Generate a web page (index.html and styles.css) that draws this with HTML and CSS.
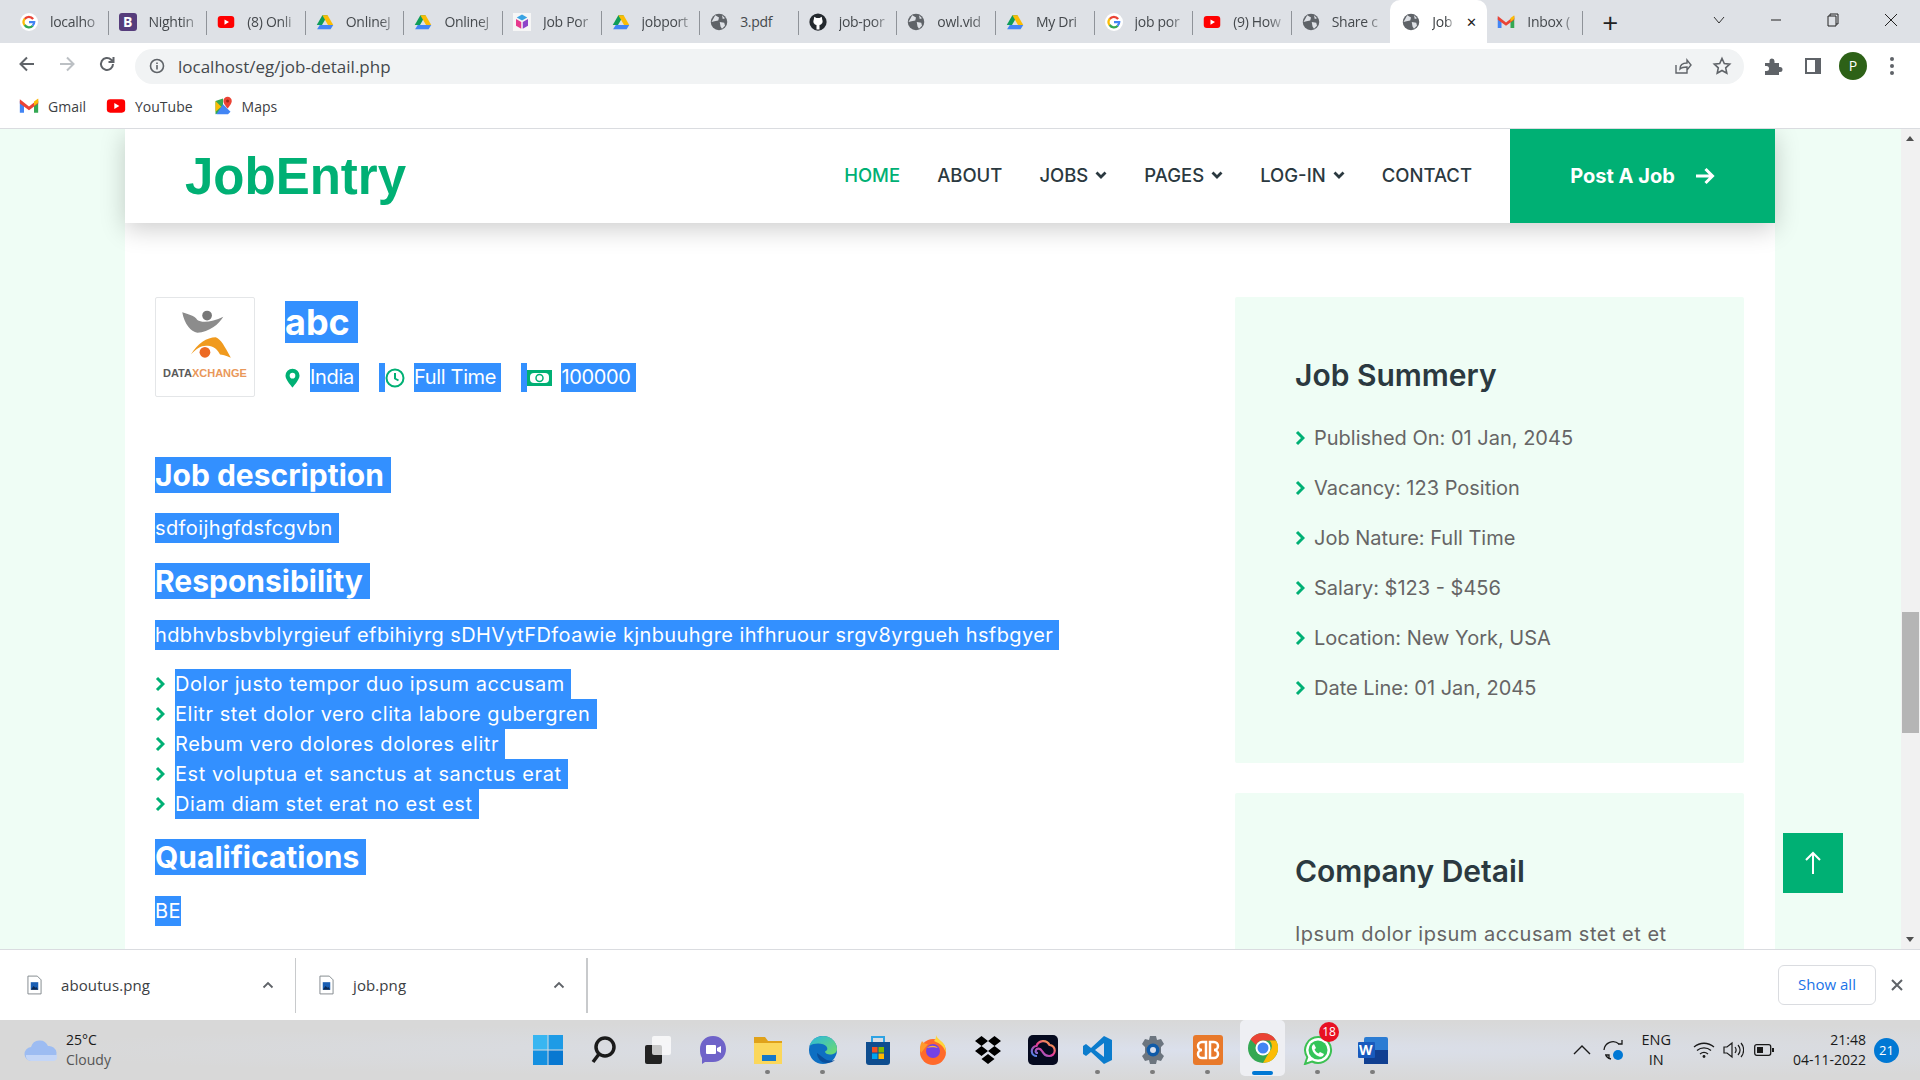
FILE: index.html
```html
<!DOCTYPE html>
<html lang="en">
<head>
    <meta charset="UTF-8">
    <meta name="viewport" content="width=device-width, initial-scale=1.0">
    <title>Job Detail</title>
    <link rel="stylesheet" href="styles.css">
</head>
<body>
    <svg class="defs" width="0" height="0">
        <defs>
            <linearGradient id="edge-top" x1="0" y1="0" x2="1" y2="1">
                <stop offset="0" stop-color="#2bb7e0"/>
                <stop offset="1" stop-color="#6fdc6a"/>
            </linearGradient>
            <linearGradient id="cc-ring" x1="0" y1="1" x2="1" y2="0">
                <stop offset="0" stop-color="#3f8cf0"/>
                <stop offset=".5" stop-color="#e8389a"/>
                <stop offset="1" stop-color="#f6c22e"/>
            </linearGradient>
        </defs>
        <symbol id="i-g" viewBox="0 0 24 24">
            <circle cx="12" cy="12" r="12" fill="#fff"/>
            <path d="M17.500 8A7 7 0 0 0 6.200 8" fill="none" stroke="#ea4335" stroke-width="3"/>
            <path d="M6.400 7.600A7 7 0 0 0 6.400 16.400" fill="none" stroke="#fbbc05" stroke-width="3"/>
            <path d="M6.200 16A7 7 0 0 0 17 17" fill="none" stroke="#34a853" stroke-width="3"/>
            <path d="M12 12h7a7 7 0 0 1-2.200 5" fill="none" stroke="#4285f4" stroke-width="3"/>
        </symbol>
        <symbol id="i-yt" viewBox="0 0 24 24">
            <rect x="1" y="4" width="22" height="16" rx="4" fill="#f00"/>
            <path d="M10 8.500l6 3.500-6 3.500z" fill="#fff"/>
        </symbol>
        <symbol id="i-drive" viewBox="0 0 24 24">
            <path d="M8.500 3h7l-7.500 13H1z" fill="#0f9d58"/>
            <path d="M8.500 3h7l7.500 13h-7z" fill="#fbbc05"/>
            <path d="M5 16h18l-3.500 5.500h-18z" fill="#4285f4"/>
        </symbol>
        <symbol id="i-globe" viewBox="0 0 24 24">
            <circle cx="12" cy="12" r="11" fill="#5f6368"/>
            <path d="M7 3l5 3-1 4-5 1-4 1zM13 12l6 1 1 4-4 4-2-3zM16 3l4 4-3 1z" fill="#dee1e6"/>
        </symbol>
        <symbol id="i-gh" viewBox="0 0 24 24">
            <circle cx="12" cy="12" r="11.500" fill="#24292e"/>
            <path d="M7 5l3 1.500h4L17 5l.7 4c1.500 3.500-.7 6.500-3.700 7v6h-4v-6c-3-.5-5.200-3.500-3.700-7z" fill="#fff"/>
        </symbol>
        <symbol id="i-gmail" viewBox="0 0 24 24">
            <path d="M1 6v14h5V10z" fill="#4285f4"/>
            <path d="M23 6v14h-5V10z" fill="#34a853"/>
            <path d="M1 4l11 8.500L23 4v5l-11 8L1 9z" fill="#ea4335"/>
            <path d="M18 6.500L23 3v5l-5 3.600z" fill="#fbbc05"/>
        </symbol>
        <symbol id="i-maps" viewBox="0 0 24 24">
            <path d="M3 6l9-3v16l-9 3z" fill="#34a853"/>
            <path d="M12 10l9 9-3 3H4z" fill="#4285f4"/>
            <path d="M3 6l7 7-7 6z" fill="#fbbc05"/>
            <path d="M17.500 1a5 5 0 0 1 5 5c0 3.500-5 9-5 9s-5-5.500-5-9a5 5 0 0 1 5-5z" fill="#ea4335"/>
            <circle cx="17.500" cy="6" r="1.800" fill="#a52714"/>
        </symbol>
        <symbol id="i-cube" viewBox="0 0 24 24">
            <rect width="24" height="24" fill="#f6f6f6"/>
            <path d="M12 2l7 4-7 4-7-4z" fill="#3aa3e3"/>
            <path d="M4 8l7 4v9l-7-4z" fill="#e6398e"/>
            <path d="M20 8l-7 4v9l7-4z" fill="#8e44c9"/>
        </symbol>
        <symbol id="i-angle" viewBox="0 0 10 16">
            <path d="M2 2l6 6-6 6" fill="none" stroke="#00b074" stroke-width="3"/>
        </symbol>
        <symbol id="i-down" viewBox="0 0 12 8">
            <path d="M1.500 1.500L6 6l4.500-4.500" fill="none" stroke="#2b3940" stroke-width="2.800"/>
        </symbol>
        <symbol id="i-file" viewBox="0 0 16 20">
            <path d="M1 .5h10l4 4v15H1z" fill="#fff" stroke="#80868b"/>
            <rect x="4" y="7" width="8" height="8" fill="#1a5fb4"/>
            <path d="M4 15l3-4 2 2 1-1 2 3z" fill="#0b2a55"/>
        </symbol>
    </svg>

    <header class="tabstrip">
        <div class="tab"><svg class="fav"><use href="#i-g"/></svg><span class="tab-title">localho</span></div>
        <div class="tab"><span class="fav fav-bs">B</span><span class="tab-title">Nightin</span></div>
        <div class="tab"><svg class="fav"><use href="#i-yt"/></svg><span class="tab-title">(8) Onli</span></div>
        <div class="tab"><svg class="fav"><use href="#i-drive"/></svg><span class="tab-title">OnlineJ</span></div>
        <div class="tab"><svg class="fav"><use href="#i-drive"/></svg><span class="tab-title">OnlineJ</span></div>
        <div class="tab"><svg class="fav"><use href="#i-cube"/></svg><span class="tab-title">Job Por</span></div>
        <div class="tab"><svg class="fav"><use href="#i-drive"/></svg><span class="tab-title">jobport</span></div>
        <div class="tab"><svg class="fav"><use href="#i-globe"/></svg><span class="tab-title tab-full">3.pdf</span></div>
        <div class="tab"><svg class="fav"><use href="#i-gh"/></svg><span class="tab-title">job-por</span></div>
        <div class="tab"><svg class="fav"><use href="#i-globe"/></svg><span class="tab-title">owl.vid</span></div>
        <div class="tab"><svg class="fav"><use href="#i-drive"/></svg><span class="tab-title">My Dri</span></div>
        <div class="tab"><svg class="fav"><use href="#i-g"/></svg><span class="tab-title">job por</span></div>
        <div class="tab"><svg class="fav"><use href="#i-yt"/></svg><span class="tab-title">(9) How</span></div>
        <div class="tab no-sep"><svg class="fav"><use href="#i-globe"/></svg><span class="tab-title">Share c</span></div>
        <div class="tab tab-active"><svg class="fav"><use href="#i-globe"/></svg><span class="tab-title">Job</span><span class="tab-close">✕</span></div>
        <div class="tab tab-last"><svg class="fav"><use href="#i-gmail"/></svg><span class="tab-title">Inbox (</span></div>
        <div class="tab-new">+</div>
        <div class="window-btns">
            <svg width="12" height="8" viewBox="0 0 12 8"><path d="M1 1l5 6 5-6" fill="none" stroke="#333"/></svg>
            <svg width="12" height="12" viewBox="0 0 12 12"><path d="M1 6h10" stroke="#222"/></svg>
            <svg width="12" height="14" viewBox="0 0 12 14"><path d="M3 3V1h8v10H9M1 3h8v10H1z" fill="none" stroke="#222"/></svg>
            <svg width="14" height="14" viewBox="0 0 14 14"><path d="M1 1l12 12M13 1L1 13" stroke="#222"/></svg>
        </div>
    </header>

    <div class="toolbar">
        <svg class="tool" viewBox="0 0 20 20"><path d="M17 10H4M10 3.500L3.500 10l6.500 6.500" fill="none" stroke="#5f6368" stroke-width="2"/></svg>
        <svg class="tool" viewBox="0 0 20 20"><path d="M3 10h13M10 3.500l6.500 6.500-6.500 6.500" fill="none" stroke="#bcc0c4" stroke-width="2"/></svg>
        <svg class="tool" viewBox="0 0 20 20"><path d="M16 10a6 6 0 1 1-1.800-4.300L16 7.500M16.500 3v5h-5" fill="none" stroke="#5f6368" stroke-width="2"/></svg>
        <div class="omnibox">
            <svg class="omni-info" viewBox="0 0 16 16"><circle cx="8" cy="8" r="6.500" fill="none" stroke="#5f6368" stroke-width="1.600"/><path d="M8 7v4.500M8 4.500v1.500" stroke="#5f6368" stroke-width="1.600"/></svg>
            <span class="omni-url">localhost/eg/job-detail.php</span>
            <svg class="omni-act" viewBox="0 0 20 20"><path d="M4 9v8h11v-3M8 13c0-4 3-6 7-6V4l4 5-4 5v-3c-3 0-5 0-7 2z" fill="none" stroke="#5f6368" stroke-width="1.400"/></svg>
            <svg class="omni-act" viewBox="0 0 20 20"><path d="M10 2.500l2.300 5 5.400.6-4 3.700 1.100 5.400-4.800-2.700-4.800 2.700 1.100-5.400-4-3.700 5.400-.6z" fill="none" stroke="#5f6368" stroke-width="1.600"/></svg>
        </div>
        <svg class="tool tool-ext" viewBox="0 0 20 20"><path d="M2 7h4.500V5a2.500 2.500 0 0 1 5 0v2H16v4h1a2.500 2.500 0 0 1 0 5h-1v3H2v-4h1.500a2.500 2.500 0 0 0 0-5H2z" fill="#5f6368"/></svg>
        <svg class="tool tool-side" viewBox="0 0 20 20"><rect x="2" y="2" width="16" height="16" fill="#5f6368"/><rect x="4" y="4" width="8" height="12" fill="#fff"/></svg>
        <span class="avatar">P</span>
        <span class="kebab"><i></i><i></i><i></i></span>
    </div>

    <div class="bookmarks">
        <span class="bookmark"><svg class="fav"><use href="#i-gmail"/></svg>Gmail</span>
        <span class="bookmark"><svg class="fav"><use href="#i-yt"/></svg>YouTube</span>
        <span class="bookmark"><svg class="fav"><use href="#i-maps"/></svg>Maps</span>
    </div>

    <main class="viewport">
        <div class="page">
            <div class="container">
                <nav class="navbar">
                    <span class="brand">JobEntry</span>
                    <ul class="nav-links">
                        <li class="nav-active">HOME</li>
                        <li>ABOUT</li>
                        <li>JOBS <svg class="caret"><use href="#i-down"/></svg></li>
                        <li>PAGES <svg class="caret"><use href="#i-down"/></svg></li>
                        <li>LOG-IN <svg class="caret"><use href="#i-down"/></svg></li>
                        <li>CONTACT</li>
                    </ul>
                    <div class="post-job">Post A Job
                        <svg width="20" height="18" viewBox="0 0 20 18"><path d="M1 9h16M10.500 2l7 7-7 7" fill="none" stroke="#fff" stroke-width="3"/></svg>
                    </div>
                </nav>

                <div class="content">
                    <section class="detail">
                        <div class="job-head">
                            <div class="job-logo">
                                <svg class="logo-mark" width="54" height="52" viewBox="0 0 50 48">
                                    <circle cx="26" cy="6" r="4.500" fill="#777"/>
                                    <path d="M3 3c6 2 11 3 14 7 4 3 14 2 24-3-4 7-13 14-24 15-6-1-12-8-14-19z" fill="#8c8c8c"/>
                                    <path d="M11 42C17 32 26 26 34 26c5 2 8 8 14 19-5-2-8-3-10-3-4-7-8-8-13-8-5 0-9 3-14 8z" fill="#f09a1e"/>
                                    <circle cx="24" cy="40" r="5" fill="#ec6a24"/>
                                </svg>
                                <span class="logo-word"><b>DATA</b><em>XCHANGE</em></span>
                            </div>
                            <div class="job-title">
                                <h3 class="title-text"><span class="sel">abc&nbsp;</span></h3>
                                <div class="job-meta">
                                    <svg class="meta-pin" viewBox="0 0 16 20"><path d="M8 0a7.500 7.500 0 0 1 7.500 7.500C15.500 12 8 20 8 20S.5 12 .5 7.500A7.500 7.500 0 0 1 8 0z" fill="#00b074"/><circle cx="8" cy="7.500" r="3" fill="#fff"/></svg>
                                    <span class="sel meta-text">India&nbsp;</span>
                                    <span class="sel meta-gap"></span>
                                    <svg class="meta-clock" viewBox="0 0 20 20"><circle cx="10" cy="10" r="8.500" fill="none" stroke="#00b074" stroke-width="2"/><path d="M10 5v5.500l3.500 2" fill="none" stroke="#00b074" stroke-width="2"/></svg>
                                    <span class="sel meta-text">Full Time&nbsp;</span>
                                    <span class="sel meta-gap"></span>
                                    <svg class="meta-money" viewBox="0 0 25 16"><rect width="25" height="16" fill="#00b074"/><rect x="3" y="3" width="19" height="10" rx="4" fill="#fff"/><circle cx="12.500" cy="8" r="3.500" fill="none" stroke="#00b074" stroke-width="1.500"/></svg>
                                    <span class="sel meta-text">100000&nbsp;</span>
                                </div>
                            </div>
                        </div>

                        <h4 class="block-head"><span class="sel">Job description&nbsp;</span></h4>
                        <p class="block-text"><span class="sel">sdfoijhgfdsfcgvbn&nbsp;</span></p>
                        <h4 class="block-head head-tight"><span class="sel">Responsibility&nbsp;</span></h4>
                        <p class="block-text"><span class="sel">hdbhvbsbvblyrgieuf efbihiyrg sDHVytFDfoawie kjnbuuhgre ihfhruour srgv8yrgueh hsfbgyer&nbsp;</span></p>
                        <ul class="check-list">
                            <li><svg class="angle"><use href="#i-angle"/></svg><span class="sel">Dolor justo tempor duo ipsum accusam&nbsp;</span></li>
                            <li><svg class="angle"><use href="#i-angle"/></svg><span class="sel">Elitr stet dolor vero clita labore gubergren&nbsp;</span></li>
                            <li><svg class="angle"><use href="#i-angle"/></svg><span class="sel">Rebum vero dolores dolores elitr&nbsp;</span></li>
                            <li><svg class="angle"><use href="#i-angle"/></svg><span class="sel">Est voluptua et sanctus at sanctus erat&nbsp;</span></li>
                            <li><svg class="angle"><use href="#i-angle"/></svg><span class="sel">Diam diam stet erat no est est&nbsp;</span></li>
                        </ul>
                        <h4 class="block-head head-tight"><span class="sel">Qualifications&nbsp;</span></h4>
                        <p class="block-text"><span class="sel">BE</span></p>
                    </section>

                    <aside class="sidebar">
                        <div class="side-card">
                            <h4 class="side-head">Job Summery</h4>
                            <ul class="side-list">
                                <li><svg class="angle"><use href="#i-angle"/></svg>Published On: 01 Jan, 2045</li>
                                <li><svg class="angle"><use href="#i-angle"/></svg>Vacancy: 123 Position</li>
                                <li><svg class="angle"><use href="#i-angle"/></svg>Job Nature: Full Time</li>
                                <li><svg class="angle"><use href="#i-angle"/></svg>Salary: $123 - $456</li>
                                <li><svg class="angle"><use href="#i-angle"/></svg>Location: New York, USA</li>
                                <li><svg class="angle"><use href="#i-angle"/></svg>Date Line: 01 Jan, 2045</li>
                            </ul>
                        </div>
                        <div class="side-card">
                            <h4 class="side-head">Company Detail</h4>
                            <p class="side-text">Ipsum dolor ipsum accusam stet et et</p>
                        </div>
                    </aside>
                </div>
            </div>
        </div>
        <div class="back-top">
            <svg width="18" height="24" viewBox="0 0 18 24"><path d="M9 23V2M2 9l7-7 7 7" fill="none" stroke="#fff" stroke-width="2"/></svg>
        </div>
        <div class="scrollbar">
            <span class="sb-up"></span>
            <span class="sb-thumb"></span>
            <span class="sb-down"></span>
        </div>
    </main>

    <div class="downloads">
        <div class="dl-item"><svg class="dl-file"><use href="#i-file"/></svg><span class="dl-name">aboutus.png</span><svg class="dl-caret" viewBox="0 0 12 8"><path d="M1.500 6.500L6 2l4.500 4.500" fill="none" stroke="#5f6368" stroke-width="1.800"/></svg></div>
        <div class="dl-item"><svg class="dl-file"><use href="#i-file"/></svg><span class="dl-name">job.png</span><svg class="dl-caret" viewBox="0 0 12 8"><path d="M1.500 6.500L6 2l4.500 4.500" fill="none" stroke="#5f6368" stroke-width="1.800"/></svg></div>
        <button class="show-all">Show all</button>
        <svg class="dl-close" viewBox="0 0 12 12"><path d="M1 1l10 10M11 1L1 11" stroke="#5f6368" stroke-width="2"/></svg>
    </div>

    <footer class="taskbar">
        <div class="weather">
            <svg width="34" height="24" viewBox="0 0 34 24"><path d="M8 23a7 7 0 0 1-1-14 9 9 0 0 1 17-1 7.500 7.500 0 0 1 2 15z" fill="#9dbcf2"/><path d="M2 17h31v2a4 4 0 0 1-4 4H7a5 5 0 0 1-5-6z" fill="#c4d6f7"/></svg>
            <div class="weather-text"><span>25°C</span><span class="weather-sub">Cloudy</span></div>
        </div>
        <div class="task-icons">
            <span class="task"><svg width="30" height="30" viewBox="0 0 30 30"><rect width="14.500" height="14.500" fill="#38b6f1"/><rect x="15.500" width="14.500" height="14.500" fill="#1e9be6"/><rect y="15.500" width="14.500" height="14.500" fill="#1590e0"/><rect x="15.500" y="15.500" width="14.500" height="14.500" fill="#0878d1"/></svg></span>
            <span class="task"><svg width="30" height="30" viewBox="0 0 30 30"><circle cx="17" cy="12" r="9" fill="none" stroke="#1a1a1a" stroke-width="3.500"/><path d="M11 19l-6 8" stroke="#1a1a1a" stroke-width="3.500"/></svg></span>
            <span class="task"><svg width="30" height="30" viewBox="0 0 30 30"><rect x="2" y="10" width="17" height="19" rx="2" fill="#222"/><rect x="9" y="1" width="19" height="19" rx="2" fill="#fff" fill-opacity=".75"/></svg></span>
            <span class="task"><svg width="30" height="30" viewBox="0 0 30 30"><path d="M15 1c8 0 13 6 13 13s-5 13-13 13H7l-3 2v-6C2 20 2 17 2 14 2 7 7 1 15 1z" fill="#6f63c9"/><rect x="8" y="10" width="10" height="9" rx="1" fill="#fff"/><path d="M19 13l4-2v7l-4-2z" fill="#fff"/></svg></span>
            <span class="task task-run"><svg width="30" height="30" viewBox="0 0 30 30"><path d="M1 2h11l3 4h14v5H1z" fill="#e0a21a"/><rect x="1" y="8" width="28" height="21" fill="#fbd75b"/><rect x="9" y="20" width="14" height="6" fill="#1478c8"/></svg></span>
            <span class="task task-run"><svg width="30" height="30" viewBox="0 0 30 30"><circle cx="15" cy="15" r="14" fill="#0e6fc2"/><path d="M1.500 11C3.500 4.500 9 1 15 1c8 0 14 6 14 13 0 4-3.500 5.500-7 5.500-2.500 0-5-1-5-3 2.500-1 3-3 1.500-5C16 8 6 7.500 1.500 11z" fill="url(#edge-top)"/><path d="M9 18c0 5 4 10 10 10 3 0 6-1 8-3-3 1-7 1-10-1-3-2-5-4-8-6z" fill="#0a4f9c"/></svg></span>
            <span class="task"><svg width="30" height="30" viewBox="0 0 30 30"><path d="M9 7V2h12v5" fill="none" stroke="#2ea3e3" stroke-width="2"/><path d="M3 7h24v20a3 3 0 0 1-3 3H6a3 3 0 0 1-3-3z" fill="#0e4d8f"/><rect x="9" y="12" width="5.500" height="5.500" fill="#f25022"/><rect x="15.500" y="12" width="5.500" height="5.500" fill="#7fba00"/><rect x="9" y="18.500" width="5.500" height="5.500" fill="#00a4ef"/><rect x="15.500" y="18.500" width="5.500" height="5.500" fill="#ffb900"/></svg></span>
            <span class="task"><svg width="30" height="30" viewBox="0 0 30 30"><circle cx="15" cy="17" r="13" fill="#ff6a2b"/><path d="M18 0c1 4 7 6 9 11l1 7c-3-9-8-10-12-12 2-2 2-4 2-6z" fill="#ffd53a"/><path d="M4 6c-2 4-3 8-1 12l7-9c-3 0-5-1-6-3z" fill="#ff9a2b"/><circle cx="15" cy="16" r="7" fill="#7542e5"/><path d="M9 13c3-3 8-3 11 0-3-1-8-1-11 0z" fill="#ffb52e"/></svg></span>
            <span class="task"><svg width="30" height="30" viewBox="0 0 30 30" fill="#000"><path d="M8.500 1l6.500 5-6.500 5L2 6zM21.500 1L28 6l-6.500 5L15 6zM8.500 11l6.500 5-6.500 5L2 16zM21.500 11l6.500 5-6.500 5L15 16zM15 19l6.500 5L15 29l-6.500-5z"/></svg></span>
            <span class="task"><svg width="30" height="30" viewBox="0 0 30 30"><rect width="30" height="30" rx="5" fill="#050a1f"/><path d="M9 21a5 5 0 0 1-.5-10A7 7 0 0 1 21.500 10 5.500 5.500 0 0 1 21 21c-4 0-5-2-7-5s-5-3-6-1 0 3 2 3" fill="none" stroke="url(#cc-ring)" stroke-width="2.200"/></svg></span>
            <span class="task task-run"><svg width="30" height="30" viewBox="0 0 30 30"><path d="M21 1l8 4v20l-8 4L8 17l-5 4-3-2v-8l3-2 5 4z" fill="#0b7ccd"/><path d="M21 8v14l-9-7z" fill="#d8deec"/></svg></span>
            <span class="task task-run"><svg width="30" height="30" viewBox="0 0 30 30"><path d="M12 1h6l1 4 4-1 3 5-3 3v6l3 3-3 5-4-1-1 4h-6l-1-4-4 1-3-5 3-3v-6L4 9l3-5 4 1z" fill="#6c757f"/><circle cx="15" cy="15" r="6.500" fill="#0f5aa8"/><circle cx="15" cy="15" r="3" fill="#d8deec"/></svg></span>
            <span class="task task-run"><svg width="30" height="30" viewBox="0 0 30 30"><rect width="30" height="30" rx="3" fill="#e8792b"/><path d="M9 7h4v16H9a4 4 0 0 1 0-8 4 4 0 0 1 0-8zM21 7h-4v16h4a4 4 0 0 0 0-8 4 4 0 0 0 0-8z" fill="none" stroke="#fff" stroke-width="2.500"/></svg></span>
            <span class="task task-chrome"><svg width="30" height="30" viewBox="0 0 30 30"><circle cx="15" cy="15" r="15" fill="#34a853"/><path d="M15 0a15 15 0 0 1 13 7.500H15a7.500 7.500 0 0 0-7 4.500L2.500 6.500A15 15 0 0 1 15 0z" fill="#ea4335"/><path d="M28 7.500A15 15 0 0 1 15 30l6.500-11.500a7.500 7.500 0 0 0 0-11z" fill="#fbbc05"/><circle cx="15" cy="15" r="7.500" fill="#fff"/><circle cx="15" cy="15" r="5.500" fill="#4285f4"/></svg></span>
            <span class="task task-run"><svg width="30" height="30" viewBox="0 0 30 30"><path d="M15 2a13 13 0 1 1-6 24.500L2 29l2.300-6.800A13 13 0 0 1 15 2z" fill="#fff" stroke="#3cc153" stroke-width="2"/><circle cx="15" cy="15" r="9.500" fill="#34c559"/><path d="M11 9l2 4-1.500 1.500c1 2 2 3 4 4L17 17l4 2c-1 3-3 3-5 2.500-4-1.500-6-4-7-7.500-.5-2 0-4 2-5z" fill="#fff"/></svg><span class="task-badge">18</span></span>
            <span class="task task-run"><svg width="30" height="30" viewBox="0 0 30 30"><rect x="6" y="2" width="24" height="27" rx="2" fill="#2b7cd3"/><rect x="6" y="15" width="24" height="14" fill="#103f91"/><rect y="7" width="17" height="16" rx="1" fill="#185abd"/></svg><b class="word-w">W</b></span>
        </div>
        <div class="tray">
            <svg width="18" height="10" viewBox="0 0 18 10"><path d="M1 9l8-8 8 8" fill="none" stroke="#1a1a1a" stroke-width="1.400"/></svg>
            <svg class="tray-sync" width="24" height="24" viewBox="0 0 24 24"><path d="M2 12a9 9 0 0 1 15-6l3 0M20 2v4h-4M3 17h4v4M4 18a9 9 0 0 0 5 3" fill="none" stroke="#1a1a1a" stroke-width="1.300"/><circle cx="16" cy="17" r="5" fill="#0078d4"/></svg>
            <div class="tray-lang"><span>ENG</span><span>IN</span></div>
            <svg class="tray-wifi" width="22" height="16" viewBox="0 0 22 16"><path d="M1 5c6-5 14-5 20 0M4 8.500c4-3.500 10-3.500 14 0M7 12c2.500-2 5.500-2 8 0" fill="none" stroke="#1a1a1a" stroke-width="1.300"/><circle cx="11" cy="14.500" r="1.400" fill="#1a1a1a"/></svg>
            <svg class="tray-sound" width="21" height="18" viewBox="0 0 21 18"><path d="M1 6h3l5-4v14l-5-4H1z" fill="none" stroke="#1a1a1a" stroke-width="1.200"/><path d="M12 6c1.500 2 1.500 4 0 6M15 4c2.500 3 2.500 7 0 10M18 2c3.500 4 3.500 10 0 14" fill="none" stroke="#1a1a1a" stroke-width="1.200"/></svg>
            <svg class="tray-batt" width="20" height="12" viewBox="0 0 20 12"><rect x=".7" y=".7" width="16" height="10.600" rx="2" fill="none" stroke="#1a1a1a" stroke-width="1.300"/><rect x="3" y="3" width="6" height="6" fill="#1a1a1a"/><rect x="18" y="4" width="2" height="4" fill="#1a1a1a"/></svg>
            <div class="tray-clock"><span>21:48</span><span>04-11-2022</span></div>
            <span class="tray-badge">21</span>
        </div>
    </footer>
</body>
</html>
```

FILE: styles.css
```css
* {
    box-sizing: border-box;
}

html, body {
    height: 100%;
}

body {
    margin: 0;
    width: 1920px;
    height: 1080px;
    display: flex;
    flex-direction: column;
    overflow: hidden;
    font-family: 'Inter', 'Liberation Sans', sans-serif;
    background: #fff;
}

.defs {
    position: absolute;
}

h3, h4, p, ul {
    margin: 0;
    padding: 0;
}

ul {
    list-style: none;
}

.sel {
    background: #3390ff;
    color: #fff;
}

/* browser chrome */
.tabstrip {
    height: 43px;
    flex: none;
    display: flex;
    align-items: center;
    padding-left: 10px;
    background: #dee1e6;
    font-family: 'Open Sans', sans-serif;
    font-size: 14px;
    color: #45494d;
}

.tab {
    width: 98.6px;
    height: 43px;
    flex: none;
    display: flex;
    align-items: center;
    gap: 12px;
    padding: 0 6px 0 10px;
    position: relative;
}

.tab::after {
    content: '';
    position: absolute;
    right: 0;
    top: 11px;
    height: 24px;
    width: 1px;
    background: #8f9399;
}

.no-sep::after, .tab-active::after {
    display: none;
}

.tab-active {
    background: #fff;
    border-radius: 10px 10px 0 0;
    padding: 0 10px 0 12px;
    width: 97px;
    color: #3c4043;
}

.tab-last {
    width: 96px;
}

.fav {
    width: 18px;
    height: 18px;
    flex: none;
}

.fav-bs {
    background: #563d7c;
    border-radius: 3px;
    color: #fff;
    font-size: 14px;
    font-weight: 700;
    line-height: 18px;
    text-align: center;
}

.tab-title {
    flex: 1;
    overflow: visible;
    white-space: nowrap;
    letter-spacing: -0.3px;
    -webkit-mask-image: linear-gradient(to right, #000 65%, rgba(0, 0, 0, 0.15));
    mask-image: linear-gradient(to right, #000 65%, rgba(0, 0, 0, 0.15));
}

.tab-full {
    -webkit-mask-image: none;
    mask-image: none;
}

.tab-close {
    font-size: 13px;
    color: #222;
}

.tab-new {
    width: 44px;
    margin-left: 5px;
    text-align: center;
    font-size: 28px;
    font-weight: 400;
    color: #222;
    line-height: 40px;
}

.window-btns {
    margin-left: auto;
    width: 207px;
    padding: 0 22px 4px 0;
    display: flex;
    align-items: center;
    justify-content: space-between;
}

.toolbar {
    height: 41px;
    flex: none;
    display: flex;
    align-items: center;
    padding: 0 26px 0 17px;
    font-family: 'Open Sans', sans-serif;
}

.tool {
    width: 20px;
    height: 20px;
    flex: none;
    margin-right: 20px;
}

.omnibox {
    flex: 1;
    height: 35px;
    margin: 5px 0 0 -2px;
    border-radius: 18px;
    background: #f1f3f4;
    display: flex;
    align-items: center;
    padding: 0 12px 0 14px;
    gap: 13px;
}

.omni-info {
    width: 16px;
    height: 16px;
}

.omni-url {
    flex: 1;
    font-size: 17px;
    color: #44484c;
}

.omni-act {
    width: 20px;
    height: 20px;
    margin-left: 7px;
}

.tool-ext {
    margin-left: 19px;
    margin-top: 5px;
}

.tool-side {
    margin-top: 5px;
}

.avatar {
    width: 28px;
    height: 28px;
    flex: none;
    border-radius: 50%;
    background: #2d6117;
    color: #fff;
    font-size: 14px;
    line-height: 28px;
    text-align: center;
    margin: 5px 0 0 -4px;
}

.kebab {
    display: flex;
    flex-direction: column;
    gap: 3px;
    margin: 5px 0 0 23px;
}

.kebab i {
    width: 4px;
    height: 4px;
    border-radius: 50%;
    background: #5f6368;
}

.bookmarks {
    height: 45px;
    flex: none;
    display: flex;
    align-items: center;
    gap: 20px;
    padding-left: 19px;
    border-bottom: 1px solid #dadce0;
    font-family: 'Open Sans', sans-serif;
    font-size: 14px;
    color: #3c4043;
}

.bookmark {
    display: flex;
    align-items: center;
    gap: 9px;
}

.bookmark .fav {
    width: 20px;
    height: 20px;
}

/* page */
.viewport {
    flex: 1;
    min-height: 0;
    position: relative;
    overflow: hidden;
    background: #effdf5;
}

.page {
    height: 100%;
    overflow: hidden;
    padding-right: 19px;
}

.container {
    width: 1650px;
    margin-left: 125px;
    background: #fff;
    height: 100%;
}

.navbar {
    height: 94px;
    display: flex;
    align-items: center;
    background: #fff;
    box-shadow: 0 6px 24px rgba(0, 0, 0, 0.2);
    position: relative;
}

.brand {
    margin-left: 60px;
    font-family: 'Liberation Sans', sans-serif;
    font-size: 51px;
    font-weight: 700;
    color: #00b074;
}

.nav-links {
    margin-left: auto;
    display: flex;
    gap: 37px;
    padding-bottom: 2px;
    font-size: 18.5px;
    font-weight: 500;
    color: #2b3940;
}

.nav-links li {
    display: flex;
    align-items: center;
    gap: 7px;
}

.nav-active {
    color: #00b074;
}

.caret {
    width: 12px;
    height: 8px;
}

.post-job {
    margin-left: 38px;
    width: 265px;
    height: 94px;
    background: #00b074;
    color: #fff;
    font-size: 20px;
    font-weight: 700;
    display: flex;
    align-items: center;
    justify-content: center;
    gap: 20px;
}

.content {
    display: flex;
    justify-content: space-between;
    padding: 74px 31px 0 30px;
}

.detail {
    width: 910px;
}

.job-head {
    display: flex;
    gap: 30px;
    height: 100px;
    margin-bottom: 60px;
}

.job-logo {
    width: 100px;
    height: 100px;
    flex: none;
    border: 1px solid #e4e6e8;
    border-radius: 2px;
    display: flex;
    flex-direction: column;
    align-items: center;
    padding-top: 11px;
    gap: 6px;
}

.logo-mark {
    margin-left: 2px;
    filter: blur(0.4px);
}

.logo-word {
    font-size: 11px;
    line-height: 13px;
    font-family: 'Liberation Sans', sans-serif;
    white-space: nowrap;
}

.logo-word b {
    color: #5a5a5a;
}

.logo-word em {
    font-style: normal;
    font-weight: 700;
    color: #e9985a;
}

.title-text {
    font-size: 36px;
    font-weight: 700;
    line-height: 42px;
    margin-top: 4px;
}

.title-text .sel {
    display: inline-block;
}

.job-meta {
    display: flex;
    align-items: center;
    margin-top: 20px;
    height: 29px;
}

.meta-text {
    font-size: 20px;
    line-height: 29px;
    height: 29px;
    letter-spacing: -0.35px;
    white-space: nowrap;
}

.meta-gap {
    width: 6px;
    height: 29px;
    margin-left: 20px;
}

.meta-pin {
    width: 15px;
    height: 20px;
    margin-right: 10px;
}

.meta-clock {
    width: 20px;
    height: 20px;
    margin-right: 9px;
}

.meta-money {
    width: 25px;
    height: 16px;
    margin-right: 9px;
}

.block-head {
    font-size: 30px;
    font-weight: 700;
    line-height: 36px;
    margin-bottom: 20px;
}

.block-head .sel, .block-text .sel {
    display: inline-block;
}

.head-tight {
    margin-top: 20px;
    margin-bottom: 21px;
}

.block-text {
    font-size: 20px;
    line-height: 30px;
    letter-spacing: 0.4px;
}

.check-list {
    margin-top: 19px;
    font-size: 20px;
    line-height: 30px;
    letter-spacing: 0.55px;
}

.check-list li {
    display: flex;
    align-items: center;
    height: 30px;
}

.check-list .sel {
    white-space: nowrap;
    height: 30px;
}

.angle {
    width: 10px;
    height: 16px;
    margin-right: 10px;
    flex: none;
}

.sidebar {
    width: 509px;
    display: flex;
    flex-direction: column;
    gap: 30px;
}

.side-card {
    background: #effdf5;
    padding: 60px;
    border-radius: 2px;
}

.side-head {
    font-size: 30px;
    font-weight: 600;
    line-height: 36px;
    color: #2b3940;
    margin-bottom: 30px;
}

.side-list {
    font-size: 20px;
    line-height: 30px;
    color: #666565;
}

.side-list .angle {
    margin-right: 9px;
}

.side-list li {
    display: flex;
    align-items: center;
    margin-bottom: 20px;
}

.side-list li:last-child {
    margin-bottom: 0;
}

.side-text {
    font-size: 20px;
    line-height: 30px;
    letter-spacing: 0.5px;
    color: #666565;
}

.back-top {
    position: absolute;
    left: 1783px;
    top: 704px;
    width: 60px;
    height: 60px;
    background: #00b074;
    display: flex;
    align-items: center;
    justify-content: center;
}

.scrollbar {
    position: absolute;
    right: 0;
    top: 0;
    bottom: 0;
    width: 19px;
    background: #f1f1f1;
    display: flex;
    flex-direction: column;
}

.sb-thumb {
    position: absolute;
    left: 1px;
    right: 1px;
    top: 483px;
    height: 121px;
    background: #b5b5b5;
}

.sb-up, .sb-down {
    position: absolute;
    left: 5px;
    border-left: 4.500px solid transparent;
    border-right: 4.500px solid transparent;
}

.sb-up {
    top: 7px;
    border-bottom: 5px solid #505050;
}

.sb-down {
    bottom: 7px;
    border-top: 5px solid #505050;
}

/* download shelf */
.downloads {
    height: 71px;
    flex: none;
    display: flex;
    align-items: center;
    border-top: 1px solid #dadce0;
    font-family: 'Open Sans', sans-serif;
    font-size: 15px;
    color: #3c4043;
    background: #fff;
}

.dl-item {
    width: 296px;
    height: 55px;
    display: flex;
    align-items: center;
    padding: 0 21px 0 27px;
    border-right: 1px solid #c8cacc;
}

.dl-item + .dl-item {
    width: 292px;
    padding-left: 23px;
    border-right-width: 2px;
}

.dl-file {
    width: 15px;
    height: 20px;
    margin-right: 19px;
    flex: none;
}

.dl-name {
    flex: 1;
    letter-spacing: 0.1px;
}

.dl-caret {
    width: 12px;
    height: 8px;
}

.show-all {
    margin-left: auto;
    width: 98px;
    height: 40px;
    padding-bottom: 4px;
    background: #fff;
    border: 1px solid #dadce0;
    border-radius: 6px;
    font-family: 'Open Sans', sans-serif;
    font-size: 15px;
    color: #1a73e8;
}

.dl-close {
    width: 12px;
    height: 12px;
    margin: 0 17px 0 15px;
}

/* taskbar */
.taskbar {
    height: 60px;
    flex: none;
    display: grid;
    grid-template-columns: 1fr auto 1fr;
    align-items: center;
    background: radial-gradient(ellipse at 62% 50%, #dbe0ec 0, #d9dbdf 40%, #d8d8d8 70%);
    font-family: 'Open Sans', sans-serif;
    font-size: 14px;
    color: #1a1a1a;
}

.weather {
    display: flex;
    align-items: center;
    gap: 8px;
    padding-left: 24px;
}

.weather-text {
    display: flex;
    flex-direction: column;
    line-height: 20px;
}

.weather-sub {
    color: #555;
}

.task-icons {
    display: flex;
}

.task {
    width: 55px;
    height: 60px;
    display: flex;
    align-items: center;
    justify-content: center;
    position: relative;
}

.task-run::after {
    content: '';
    position: absolute;
    left: 25px;
    bottom: 6px;
    width: 5px;
    height: 4px;
    border-radius: 2px;
    background: #7c7c7c;
}

.task-chrome {
    background: #eeeff3;
    border-radius: 5px;
    height: 56px;
    width: 45px;
    margin: 0 5px;
}

.task-chrome::after {
    content: '';
    position: absolute;
    left: 12px;
    bottom: 1px;
    width: 21px;
    height: 4px;
    border-radius: 2px;
    background: #0078d4;
}

.task-badge {
    position: absolute;
    top: 2px;
    right: 6px;
    width: 20px;
    height: 20px;
    border-radius: 50%;
    background: #e81123;
    color: #fff;
    font-size: 12px;
    line-height: 20px;
    text-align: center;
}

.word-w {
    position: absolute;
    left: 14px;
    top: 20px;
    font-size: 14px;
    color: #fff;
}

.tray {
    display: flex;
    align-items: center;
    justify-content: flex-end;
    padding-right: 21px;
}

.tray-sync {
    margin-left: 11px;
}

.tray-lang {
    display: flex;
    flex-direction: column;
    align-items: center;
    line-height: 20px;
    margin-left: 15px;
    font-size: 14.5px;
}

.tray-wifi {
    margin-left: 22px;
}

.tray-sound {
    margin-left: 8px;
}

.tray-batt {
    margin-left: 10px;
}

.tray-clock {
    display: flex;
    flex-direction: column;
    align-items: flex-end;
    line-height: 20px;
    margin-left: 19px;
}

.tray-badge {
    width: 25px;
    height: 25px;
    border-radius: 50%;
    background: #0078d4;
    color: #fff;
    font-size: 13px;
    line-height: 25px;
    text-align: center;
    margin-left: 8px;
}
```
